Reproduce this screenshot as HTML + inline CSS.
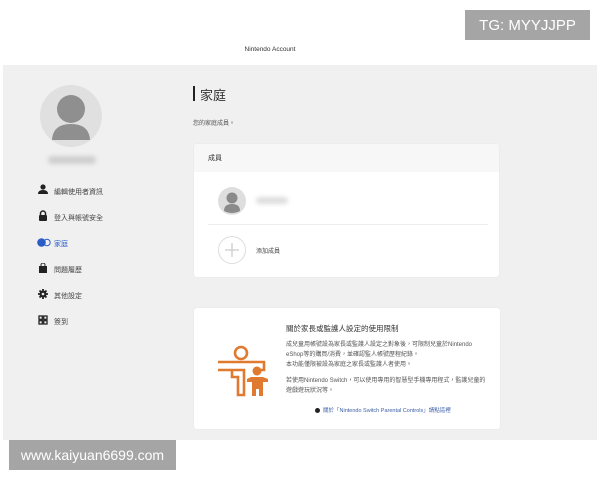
<!DOCTYPE html>
<html><head><meta charset="utf-8"><style>
*{margin:0;padding:0;box-sizing:border-box}
body{width:600px;height:480px;background:#fff;position:relative;overflow:hidden;font-family:"Liberation Sans","Noto Sans CJK TC",sans-serif;color:#333}
.abs{position:absolute}
.gray{left:3px;top:65px;width:594px;height:375px;background:#f0f0f0}
.card{background:#fff;border-radius:3px;box-shadow:0 0 2px rgba(0,0,0,.06)}
.nav{font-size:7px;color:#444}
.wm{background:#a5a5a5;color:#fff;font-size:14px;display:flex;align-items:center;justify-content:center}
.blur{filter:blur(2px);background:#cfcfcf;border-radius:4px}
p.t{font-size:6px;line-height:10px;color:#555}
</style></head><body>
<div class="abs wm" style="left:465px;top:10px;width:125px;height:30px;font-size:15px">TG: MYYJJPP</div>
<div class="abs" style="left:0;top:46px;width:540px;text-align:center;font-size:6.5px;color:#333">Nintendo Account</div>
<div class="abs gray"></div>
<!-- avatar -->
<svg class="abs" style="left:39px;top:84px" width="64" height="64" viewBox="0 0 64 64"><circle cx="32" cy="32" r="31" fill="#e0e0e0"/><circle cx="32" cy="25" r="14" fill="#8f8f8f"/><path d="M13 56 Q14 40 32 40 Q50 40 51 56 Z" fill="#8f8f8f"/></svg>
<div class="abs blur" style="left:48px;top:156px;width:48px;height:8px"></div>
<!-- nav -->
<svg class="abs" style="left:38px;top:184px" width="10" height="10"><circle cx="5" cy="3" r="2.6" fill="#222"/><path d="M0 10 Q0 6 5 6 Q10 6 10 10Z" fill="#222"/></svg>
<div class="abs nav" style="left:54px;top:187px">編輯使用者資訊</div>
<svg class="abs" style="left:38px;top:210px" width="10" height="11"><path d="M2.5 5 V3.5 a2.5 2.5 0 0 1 5 0 V5" stroke="#222" stroke-width="1.5" fill="none"/><rect x="1" y="5" width="8" height="6" rx="1" fill="#222"/></svg>
<div class="abs nav" style="left:54px;top:213px">登入與帳號安全</div>
<svg class="abs" style="left:37px;top:238px" width="14" height="9"><circle cx="4.5" cy="4.5" r="4.3" fill="#2a5cc8"/><circle cx="10" cy="4.5" r="3.2" fill="none" stroke="#2a5cc8" stroke-width="1"/></svg>
<div class="abs nav" style="left:54px;top:239px;color:#2a5cc8">家庭</div>
<svg class="abs" style="left:38px;top:263px" width="10" height="10"><path d="M3 3 V2 a2 2 0 0 1 4 0 V3" stroke="#222" fill="none"/><rect x="1" y="3" width="8" height="7" fill="#222"/></svg>
<div class="abs nav" style="left:54px;top:265px">問題履歷</div>
<svg class="abs" style="left:38px;top:289px" width="10" height="10" viewBox="0 0 10 10"><circle cx="5" cy="5" r="3.5" fill="#222"/><path d="M5 0V10M0 5H10M1.5 1.5L8.5 8.5M8.5 1.5L1.5 8.5" stroke="#222" stroke-width="1.8"/><circle cx="5" cy="5" r="1.3" fill="#f0f0f0"/></svg>
<div class="abs nav" style="left:54px;top:291px">其他設定</div>
<svg class="abs" style="left:38px;top:315px" width="10" height="10"><g fill="none" stroke="#222" stroke-width="1.3"><rect x="1" y="1" width="3.3" height="3.3"/><rect x="5.7" y="1" width="3.3" height="3.3"/><rect x="1" y="5.7" width="3.3" height="3.3"/><rect x="5.7" y="5.7" width="3.3" height="3.3"/></g></svg>
<div class="abs nav" style="left:54px;top:317px">簽到</div>
<!-- title -->
<div class="abs" style="left:193px;top:86px;width:2px;height:15px;background:#222"></div>
<div class="abs" style="left:200px;top:85px;font-size:13px;color:#333">家庭</div>
<div class="abs" style="left:193px;top:118px;font-size:6px;color:#555">您的家庭成員。</div>
<!-- card 1 -->
<div class="abs card" style="left:194px;top:144px;width:305px;height:133px;overflow:hidden">
<div style="height:28px;background:#f7f7f7;font-size:7px;padding:9px 0 0 14px;color:#333">成員</div>
</div>
<svg class="abs" style="left:217px;top:186px" width="30" height="30" viewBox="0 0 30 30"><circle cx="15" cy="15" r="14" fill="#dedede"/><circle cx="15" cy="12" r="5.5" fill="#8a8a8a"/><path d="M7 25 Q7 18 15 18 Q23 18 23 25 Q15 29 7 25Z" fill="#8a8a8a"/></svg>
<div class="abs blur" style="left:256px;top:197px;width:32px;height:7px;background:#ddd"></div>
<div class="abs" style="left:208px;top:224px;width:280px;height:1px;background:#eee"></div>
<svg class="abs" style="left:217px;top:235px" width="30" height="30" viewBox="0 0 30 30"><circle cx="15" cy="15" r="13.5" fill="none" stroke="#ddd" stroke-width="1"/><path d="M15 8V22M8 15H22" stroke="#ccc" stroke-width="1.3"/></svg>
<div class="abs" style="left:256px;top:246px;font-size:6px;color:#444">添加成員</div>
<!-- card 2 -->
<div class="abs card" style="left:194px;top:308px;width:306px;height:121px"></div>
<svg class="abs" style="left:214px;top:340px" width="58" height="60" viewBox="214 340 58 60"><g fill="none" stroke="#e07a30" stroke-width="2.6"><circle cx="241" cy="353" r="6"/><path d="M218 362 H264 V370 H257 M244 370 V395 H238 V377 H232 V370 H218 Z"/></g><g fill="#e07a30"><circle cx="257" cy="371" r="4.5"/><path d="M251 377 H263 L268 379 V382 H263 V396 H259 V389 H256 V396 H252 V382 H247 V379Z"/></g></svg>
<div class="abs" style="left:286px;top:323px;font-size:7.5px;color:#333">關於家長或監護人設定的使用限制</div>
<p class="abs t" style="left:286px;top:340px;width:205px">成兒童用帳號設為家長或監護人設定之對象後，可限制兒童於Nintendo eShop等的購買/消費，並確認監人帳號歷程紀錄。<br>本功能僅限被設為家庭之家長或監護人者使用。</p>
<p class="abs t" style="left:286px;top:376px;width:205px">若使用Nintendo Switch，可以使用專用的智慧型手機專用程式，監護兒童的遊戲遊玩狀況等。</p>
<div class="abs" style="left:315px;top:406px;font-size:5.5px;color:#3c5fa8"><span style="display:inline-block;width:5px;height:5px;border-radius:50%;background:#222;margin-right:3px;vertical-align:-0.5px"></span>關於「Nintendo Switch Parental Controls」請點這裡</div>
<div class="abs wm" style="left:9px;top:440px;width:167px;height:30px">www.kaiyuan6699.com</div>
</body></html>
